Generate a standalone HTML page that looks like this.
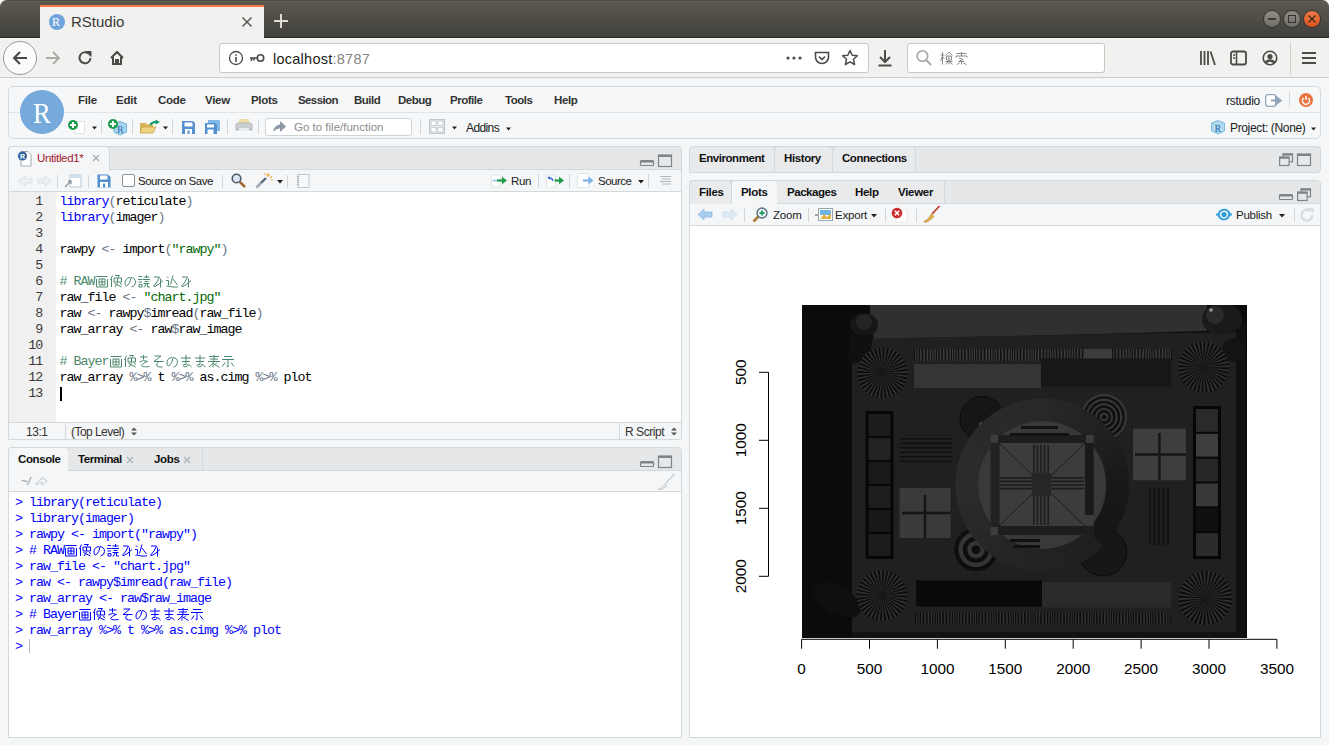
<!DOCTYPE html>
<html><head><meta charset="utf-8">
<style>
*{box-sizing:border-box;margin:0;padding:0}
html,body{width:1329px;height:745px;overflow:hidden;background:#f5f6f7;font-family:"Liberation Sans",sans-serif;position:relative}
.a{position:absolute}
.t{position:absolute;white-space:nowrap;line-height:1}
.mono{font-family:"Liberation Mono",monospace}
svg{position:absolute;overflow:visible}
svg.cj{position:static;display:inline-block;overflow:visible}
</style></head><body>

<!-- ================= TITLE BAR ================= -->
<div class="a" style="left:0;top:0;width:1329px;height:38px;background:linear-gradient(#5b5850,#5a574f 8%,#403f3a);border-radius:7px 7px 0 0;border-top:1px solid #4d4b45"></div>
<div class="a" style="left:5px;top:1px;width:1319px;height:1px;background:#625f56"></div>
<div class="a" style="left:0;top:37px;width:1329px;height:1px;background:#2a2926"></div>
<div class="a" style="left:40px;top:5px;width:224px;height:33px;background:#f2f1f0;border-top:2px solid #f67a45"></div>
<div class="a" style="left:49px;top:14px;width:16px;height:16px;border-radius:50%;background:#6fa5dc"></div>
<div class="t" style="left:52px;top:16px;font-family:'Liberation Serif',serif;font-size:12px;color:#fff">R</div>
<div class="t" style="left:71px;top:14px;font-size:15px;color:#3b3a36">RStudio</div>
<svg style="left:242px;top:17px" width="10" height="10"><path d="M0.5 0.5L9.5 9.5M9.5 0.5L0.5 9.5" stroke="#5a5956" stroke-width="1.5"/></svg>
<svg style="left:274px;top:14px" width="14" height="14"><path d="M7 0V14M0 7H14" stroke="#dedbd3" stroke-width="2"/></svg>
<!-- window buttons -->
<div class="a" style="left:1263px;top:10px;width:18px;height:18px;border-radius:50%;background:linear-gradient(#8f8c85,#6f6d67);border:1px solid #34332f"></div>
<div class="a" style="left:1268px;top:18px;width:8px;height:1.6px;background:#3b3a36"></div>
<div class="a" style="left:1283px;top:10px;width:18px;height:18px;border-radius:50%;background:linear-gradient(#8f8c85,#6f6d67);border:1px solid #34332f"></div>
<div class="a" style="left:1288px;top:15px;width:8px;height:8px;border:1.3px solid #34332f"></div>
<div class="a" style="left:1303px;top:10px;width:18px;height:18px;border-radius:50%;background:linear-gradient(#f27a4c,#e0531f);border:1px solid #34332f"></div>
<svg style="left:1308px;top:15px" width="8" height="8"><path d="M0.5 0.5L7.5 7.5M7.5 0.5L0.5 7.5" stroke="#2a2a22" stroke-width="1.1"/></svg>

<!-- ================= NAV BAR ================= -->
<div class="a" style="left:0;top:38px;width:1329px;height:40px;background:#f2f1f0;border-bottom:1px solid #cfcdc9"></div>
<div class="a" style="left:3px;top:41px;width:34px;height:34px;border-radius:50%;background:#fbfbfb;border:1px solid #9a9996"></div>
<svg style="left:12px;top:51px" width="16" height="14"><path d="M15 7H2M8 1L2 7L8 13" stroke="#474643" stroke-width="2" fill="none"/></svg>
<svg style="left:45px;top:51px" width="16" height="14"><path d="M1 7H14M8 1L14 7L8 13" stroke="#acaba8" stroke-width="1.8" fill="none"/></svg>
<svg style="left:77px;top:50px" width="16" height="16"><path d="M13.5 8A5.5 5.5 0 1 1 11.5 3.5" stroke="#4c4b48" stroke-width="2" fill="none"/><path d="M9 1.5H14V6.5Z" fill="#4c4b48" stroke="#4c4b48" stroke-width="1"/></svg>
<svg style="left:109px;top:50px" width="16" height="16"><path d="M2 8L8 2L14 8M4 7V14H12V7M7 14V10H9V14" stroke="#4c4b48" stroke-width="2" fill="none"/></svg>
<!-- url bar -->
<div class="a" style="left:219px;top:43px;width:650px;height:30px;background:#fff;border:1px solid #c8c7c3;border-radius:3px"></div>
<svg style="left:228px;top:50px" width="16" height="16"><circle cx="8" cy="8" r="6.5" stroke="#4c4b48" stroke-width="1.3" fill="none"/><path d="M8 7V12M8 4.2V5.8" stroke="#4c4b48" stroke-width="1.6"/></svg>
<svg style="left:249px;top:52px" width="16" height="12"><circle cx="11.5" cy="6" r="3.2" stroke="#4c4b48" stroke-width="1.6" fill="none"/><path d="M8 6H1M2.5 6V9M5 6V8.5" stroke="#4c4b48" stroke-width="1.6"/></svg>
<div class="t" style="left:273px;top:52px;font-size:14.5px;color:#1c1b1a;letter-spacing:0.25px">localhost<span style="color:#858481">:8787</span></div>
<svg style="left:786px;top:56px" width="16" height="4"><circle cx="2" cy="2" r="1.6" fill="#4c4b48"/><circle cx="8" cy="2" r="1.6" fill="#4c4b48"/><circle cx="14" cy="2" r="1.6" fill="#4c4b48"/></svg>
<svg style="left:814px;top:50px" width="16" height="16"><path d="M1.5 2.5H14.5V7A6.5 6.5 0 0 1 1.5 7Z" stroke="#4c4b48" stroke-width="1.6" fill="none"/><path d="M5 6.5L8 9.5L11 6.5" stroke="#4c4b48" stroke-width="1.6" fill="none"/></svg>
<svg style="left:841px;top:49px" width="18" height="18"><path d="M9 1.5L11.2 6.3L16.4 6.8L12.5 10.3L13.6 15.5L9 12.8L4.4 15.5L5.5 10.3L1.6 6.8L6.8 6.3Z" stroke="#4c4b48" stroke-width="1.5" fill="none" stroke-linejoin="round"/></svg>
<svg style="left:877px;top:49px" width="16" height="18"><path d="M8 1V13M3 8L8 13L13 8M1.5 16.5H14.5" stroke="#4c4b48" stroke-width="2" fill="none"/></svg>
<!-- search -->
<div class="a" style="left:907px;top:43px;width:198px;height:30px;background:#fff;border:1px solid #c8c7c3;border-radius:3px"></div>
<svg style="left:915px;top:49px" width="18" height="18"><circle cx="7.4" cy="7.1" r="5.3" stroke="#a5a5a3" stroke-width="1.6" fill="none"/><path d="M11.2 11L16.2 16" stroke="#a5a5a3" stroke-width="1.8"/></svg>
<div class="t" style="left:939px;top:50.5px;color:#8b8a87"><svg class="cj" width="15" height="16" viewBox="0 0 14 16" style="vertical-align:top;margin-top:0px"><path d="M3 1V13.5M1 4H5M3 5L1 10M3 5.5L5 8M9.5 1L6.5 4.5M9.5 1L13 4.5M7 5H12V9H7ZM9.5 5V13.5M6 10.5H13M9 10.5L6 13.5M10 10.5L13 13.5" stroke="currentColor" stroke-width="1" fill="none"/></svg><svg class="cj" width="15" height="16" viewBox="0 0 14 16" style="vertical-align:top;margin-top:0px"><path d="M2 2.5H12M7 1V5M1.5 6.5V5H12.5V6.5M4.5 7L8.5 8.5L4 10.5H10M7 10.5V13.5M5 12L2.5 13.5M9 12L12 13.5" stroke="currentColor" stroke-width="1" fill="none"/></svg></div>
<!-- right icons -->
<svg style="left:1199px;top:50px" width="18" height="16"><path d="M2 1V15M5.5 1V15M9 1V15M11.5 1.5L16 15" stroke="#4c4b48" stroke-width="1.8" fill="none"/></svg>
<svg style="left:1230px;top:50px" width="17" height="16"><rect x="1" y="1.5" width="15" height="13" rx="2" stroke="#4c4b48" stroke-width="1.8" fill="none"/><path d="M6.5 1.5V14.5M3 5H5M3 8H5" stroke="#4c4b48" stroke-width="1.6"/></svg>
<svg style="left:1262px;top:50px" width="16" height="16"><circle cx="8" cy="8" r="6.8" stroke="#4c4b48" stroke-width="1.6" fill="none"/><circle cx="8" cy="6.5" r="2.6" fill="#4c4b48"/><path d="M3.5 12.5Q8 8.5 12.5 12.5" stroke="#4c4b48" stroke-width="2.5" fill="none"/></svg>
<div class="a" style="left:1290px;top:42px;width:1px;height:33px;background:#d4d2ce"></div>
<svg style="left:1301px;top:51px" width="16" height="14"><path d="M1 2H15M1 7H15M1 12H15" stroke="#4c4b48" stroke-width="1.8"/></svg>

<!-- ================= RSTUDIO TOOLBAR ================= -->
<div class="a" style="left:8px;top:86px;width:1313px;height:53px;background:#f5f7f8;border:1px solid #d6dadd;border-radius:5px"></div>
<div class="a" style="left:9px;top:112px;width:1311px;height:1px;background:#dfe3e5"></div>


<!-- toolbar row 1 -->
<div class="a" style="left:20px;top:90px;width:44px;height:44px;border-radius:50%;background:#75aadb"></div>
<div class="t" style="left:32.5px;top:99px;font-family:'Liberation Serif',serif;font-size:29px;color:#fff;transform:scaleX(0.92);transform-origin:0 0">R</div>
<div class="t" style="left:78px;top:95px;font-size:11.5px;font-weight:bold;color:#333;letter-spacing:-0.2px">File</div>
<div class="t" style="left:116px;top:95px;font-size:11.5px;font-weight:bold;color:#333;letter-spacing:-0.2px">Edit</div>
<div class="t" style="left:158px;top:95px;font-size:11.5px;font-weight:bold;color:#333;letter-spacing:-0.3px">Code</div>
<div class="t" style="left:205px;top:95px;font-size:11.5px;font-weight:bold;color:#333;letter-spacing:-0.3px">View</div>
<div class="t" style="left:251px;top:95px;font-size:11.5px;font-weight:bold;color:#333;letter-spacing:-0.3px">Plots</div>
<div class="t" style="left:298px;top:95px;font-size:11.5px;font-weight:bold;color:#333;letter-spacing:-0.6px">Session</div>
<div class="t" style="left:354px;top:95px;font-size:11.5px;font-weight:bold;color:#333;letter-spacing:-0.5px">Build</div>
<div class="t" style="left:398px;top:95px;font-size:11.5px;font-weight:bold;color:#333;letter-spacing:-0.5px">Debug</div>
<div class="t" style="left:450px;top:95px;font-size:11.5px;font-weight:bold;color:#333;letter-spacing:-0.5px">Profile</div>
<div class="t" style="left:505px;top:95px;font-size:11.5px;font-weight:bold;color:#333;letter-spacing:-0.5px">Tools</div>
<div class="t" style="left:554px;top:95px;font-size:11.5px;font-weight:bold;color:#333;letter-spacing:-0.4px">Help</div>
<div class="t" style="left:1226px;top:95px;font-size:12px;color:#222;letter-spacing:-0.3px">rstudio</div>
<svg style="left:1265px;top:94px" width="17" height="13"><rect x="0.7" y="0.7" width="10" height="11.6" rx="2" fill="#fff" stroke="#93a5b8" stroke-width="1.3"/><path d="M6 6.5H12M11 3L15.5 6.5L11 10Z" stroke="#93a5b8" stroke-width="2.2" fill="#93a5b8"/></svg>
<div class="a" style="left:1289px;top:92px;width:1px;height:15px;background:#d3d7da"></div>
<div class="a" style="left:1299px;top:93px;width:14px;height:14px;border-radius:50%;background:#e8733c"></div>
<svg style="left:1301px;top:95px" width="10" height="10"><path d="M2.6 3A3.6 3.6 0 1 0 7.4 3" stroke="#fff" stroke-width="1.4" fill="none"/><path d="M5 1V5" stroke="#fff" stroke-width="1.4"/></svg>

<!-- toolbar row 2 -->
<div class="a" style="left:74px;top:121px;width:11px;height:13px;background:#fff;border:1px solid #e2e5e7"></div>
<div class="a" style="left:68px;top:120px;width:10px;height:10px;border-radius:50%;background:#1a9c4c"></div>
<svg style="left:68px;top:120px" width="10" height="10"><path d="M5 2V8M2 5H8" stroke="#fff" stroke-width="2"/></svg>
<svg style="left:91px;top:126px" width="7" height="4"><path d="M1 0.5H6L3.5 3.5Z" fill="#222"/></svg>
<div class="a" style="left:101px;top:119px;width:1px;height:15px;background:#d3d7da"></div>
<svg style="left:112px;top:120px" width="16" height="16"><path d="M2 4L8 1.5L14.5 4V12L8 15L2 12Z" fill="#a8d6ec" stroke="#6ab3d8" stroke-width="1"/><text x="5" y="12.5" font-family="Liberation Serif" font-size="10" fill="#2a6fb0">R</text></svg>
<div class="a" style="left:108px;top:119px;width:10px;height:10px;border-radius:50%;background:#1a9c4c"></div>
<svg style="left:108px;top:119px" width="10" height="10"><path d="M5 2V8M2 5H8" stroke="#fff" stroke-width="2"/></svg>
<div class="a" style="left:132px;top:119px;width:1px;height:15px;background:#d3d7da"></div>
<svg style="left:139px;top:119px" width="22" height="16"><path d="M1 4H7L8.5 5.5H14V14H1Z" fill="#d9b55a"/><path d="M3 8H17L14 14H1Z" fill="#f0d481" stroke="#c9a24a" stroke-width="0.8"/><path d="M11 6Q13 2.5 17.5 3" stroke="#1a9c6c" stroke-width="2" fill="none"/><path d="M16.5 0.5L21 3L16.5 5.5Z" fill="#1a9c6c"/></svg>
<svg style="left:162px;top:126px" width="7" height="4"><path d="M1 0.5H6L3.5 3.5Z" fill="#222"/></svg>
<div class="a" style="left:172px;top:119px;width:1px;height:15px;background:#d3d7da"></div>
<svg style="left:181px;top:120px" width="15" height="15"><path d="M1 1H12L14 3V14H1Z" fill="#5490cf"/><rect x="3.5" y="2.5" width="8" height="4" fill="#fff"/><rect x="4" y="9" width="7" height="5" fill="#fff"/><rect x="6.5" y="10.5" width="2" height="3.5" fill="#5490cf"/></svg>
<svg style="left:204px;top:119px" width="17" height="16"><path d="M4 1H15L16 2V12H4Z" fill="#7fb8e6"/><path d="M1 4H11L13 6V15H1Z" fill="#5490cf"/><rect x="3" y="5.5" width="7" height="3" fill="#fff"/><rect x="3.5" y="10.5" width="6" height="4.5" fill="#fff"/></svg>
<div class="a" style="left:227px;top:119px;width:1px;height:15px;background:#d3d7da"></div>
<svg style="left:235px;top:118px" width="18" height="15"><rect x="4" y="1" width="10" height="6" fill="#eedba6"/><path d="M1 7Q1 5 3 5H15Q17 5 17 7V12H1Z" fill="#c9cdd1" stroke="#a9aeb3" stroke-width="0.8"/><rect x="4" y="10" width="10" height="3" fill="#e9ecee"/></svg>
<div class="a" style="left:258px;top:119px;width:1px;height:15px;background:#d3d7da"></div>
<div class="a" style="left:265px;top:118px;width:147px;height:18px;background:#fff;border:1px solid #cfd3d6;border-radius:3px"></div>
<svg style="left:272px;top:120px" width="15" height="13"><path d="M1 12Q2 5 8 4.5V1L14 6.5L8 12V8.5Q4 8.5 1 12Z" fill="#8e99a5"/></svg>
<div class="t" style="left:294px;top:122px;font-size:11.5px;color:#8c8c8c;letter-spacing:0px">Go to file/function</div>
<div class="a" style="left:420px;top:119px;width:1px;height:15px;background:#d3d7da"></div>
<svg style="left:429px;top:119px" width="16" height="15"><rect x="0.5" y="0.5" width="15" height="14" fill="#e6e8ea" stroke="#c2c7cb"/><rect x="2" y="2" width="5" height="4.5" fill="#fff" stroke="#c2c7cb" stroke-width="0.8"/><rect x="9" y="2" width="5" height="4.5" fill="#fff" stroke="#c2c7cb" stroke-width="0.8"/><rect x="2" y="8.5" width="5" height="4.5" fill="#fff" stroke="#c2c7cb" stroke-width="0.8"/><rect x="9" y="8.5" width="5" height="4.5" fill="#fff" stroke="#c2c7cb" stroke-width="0.8"/></svg>
<svg style="left:451px;top:126px" width="7" height="4"><path d="M1 0.5H6L3.5 3.5Z" fill="#222"/></svg>
<div class="t" style="left:466px;top:122px;font-size:12px;color:#222;letter-spacing:-0.6px">Addins</div>
<svg style="left:505px;top:127px" width="7" height="4"><path d="M1 0.5H6L3.5 3.5Z" fill="#222"/></svg>
<svg style="left:1210px;top:119px" width="16" height="16"><path d="M1.5 4L8 1.5L14.5 4V12L8 15L1.5 12Z" fill="#b5dcee" stroke="#7cbddf" stroke-width="1"/><path d="M1.5 4L8 6.5L14.5 4M8 6.5V15" stroke="#8cc7e3" stroke-width="0.7" fill="none"/><text x="4.5" y="12.5" font-family="Liberation Serif" font-size="10" fill="#2f6ea8">R</text></svg>
<div class="t" style="left:1230px;top:122px;font-size:12px;color:#222;letter-spacing:-0.35px">Project: (None)</div>
<svg style="left:1310px;top:127px" width="7" height="4"><path d="M1 0.5H6L3.5 3.5Z" fill="#222"/></svg>

<!-- ================= SOURCE PANE ================= -->
<div class="a" style="left:8px;top:146px;width:674px;height:294px;background:#f4f6f7;border:1px solid #d3d8db;border-radius:4px 4px 0 0"></div>
<div class="a" style="left:9px;top:147px;width:672px;height:23px;background:#e5e7e9;border-bottom:1px solid #d3d8db;border-radius:3px 3px 0 0"></div>
<div class="a" style="left:8px;top:146px;width:102px;height:25px;background:#f4f6f7;border:1px solid #d3d8db;border-bottom:none;border-radius:4px 4px 0 0"></div>
<svg style="left:17px;top:150px" width="17" height="17"><path d="M4 1.5H11L14 4.5V16H4Z" fill="#fff" stroke="#9aa3ab" stroke-width="0.9"/><circle cx="5.5" cy="6" r="4.5" fill="#2b5f9e"/><text x="3" y="8.8" font-family="Liberation Sans" font-weight="bold" font-size="7" fill="#fff">R</text></svg>
<div class="t" style="left:37px;top:153px;font-size:11.5px;color:#a3192e;letter-spacing:-0.35px">Untitled1*</div>
<svg style="left:92px;top:154px" width="8" height="8"><path d="M1 1L7 7M7 1L1 7" stroke="#a9aeb2" stroke-width="1.4"/></svg>
<svg style="left:640px;top:154px" width="34" height="14"><rect x="0.5" y="6.5" width="13" height="5" rx="1" fill="none" stroke="#7d848a" stroke-width="1.2"/><rect x="0.5" y="6.5" width="13" height="2" fill="#7d848a"/><rect x="18.5" y="1" width="13" height="11.5" fill="none" stroke="#7d848a" stroke-width="1.2"/><rect x="18.5" y="1" width="13" height="2" fill="#7d848a"/></svg>
<div class="a" style="left:9px;top:191px;width:672px;height:1px;background:#d3d8db"></div>
<!-- toolbar icons -->
<svg style="left:18px;top:175px" width="34" height="12"><path d="M1 6L7 1V4H14V8H7V11Z" fill="#eef1f3" stroke="#d6dbde" stroke-width="0.8"/><path d="M33 6L27 1V4H20V8H27V11Z" fill="#eef1f3" stroke="#d6dbde" stroke-width="0.8"/></svg>
<div class="a" style="left:57px;top:175px;width:1px;height:13px;background:#d3d7da"></div>
<svg style="left:64px;top:174px" width="18" height="14"><rect x="6" y="1" width="11" height="12" fill="#fff" stroke="#b8c6d4" stroke-width="1"/><rect x="6" y="1" width="11" height="3" fill="#cfdff0"/><path d="M1 13L7 7M4 7H7V10" stroke="#8b97a3" stroke-width="1.3" fill="none"/></svg>
<div class="a" style="left:88px;top:175px;width:1px;height:13px;background:#d3d7da"></div>
<svg style="left:97px;top:174px" width="14" height="14"><path d="M0.5 0.5H11L13.5 3V13.5H0.5Z" fill="#5490cf"/><rect x="3" y="1.5" width="7.5" height="4" fill="#fff"/><rect x="3" y="8" width="8" height="5.5" fill="#fff"/><rect x="6" y="9.5" width="2.2" height="4" fill="#5490cf"/></svg>
<div class="a" style="left:122px;top:174px;width:13px;height:13px;background:#fff;border:1px solid #8b9196;border-radius:2px"></div>
<div class="t" style="left:138px;top:176px;font-size:11.5px;color:#222;letter-spacing:-0.5px">Source on Save</div>
<div class="a" style="left:222px;top:175px;width:1px;height:13px;background:#d3d7da"></div>
<svg style="left:231px;top:173px" width="15" height="15"><circle cx="5.5" cy="5.5" r="4.3" fill="#dbe7f2" stroke="#4b5864" stroke-width="1.6"/><path d="M8.8 8.8L14 14" stroke="#9a6a2f" stroke-width="2.6"/></svg>
<svg style="left:255px;top:172px" width="18" height="17"><path d="M1.5 15.5L11 6" stroke="#5b6a7a" stroke-width="2.4"/><path d="M1.5 15.5L6 11" stroke="#a7b4c0" stroke-width="2.4"/><path d="M13 1V5M11 3H15M15.5 6L17 4.5M16 8H18M9 1L10 2.5" stroke="#f0a83c" stroke-width="1.2"/></svg>
<svg style="left:277px;top:180px" width="6" height="4"><path d="M0 0H6L3 3.5Z" fill="#222"/></svg>
<div class="a" style="left:287px;top:175px;width:1px;height:13px;background:#d3d7da"></div>
<svg style="left:297px;top:174px" width="13" height="14"><rect x="1" y="0.5" width="11" height="13" fill="#f7f8f9" stroke="#b8bec3" stroke-width="0.9"/><path d="M1 2V12" stroke="#9aa1a7" stroke-width="1.5" stroke-dasharray="1 1"/></svg>
<svg style="left:491px;top:174px" width="18" height="14"><rect x="0.5" y="1" width="9" height="12" rx="1" fill="#fff" stroke="#dbe0e3" stroke-width="0.8"/><path d="M1.5 6.5H6" stroke="#a6c8ea" stroke-width="1.8"/><path d="M6 6.5H12" stroke="#1e9c4a" stroke-width="2.2"/><path d="M11 2.8L16 6.5L11 10.2Z" fill="#1e9c4a"/></svg>
<div class="t" style="left:511px;top:176px;font-size:11.5px;color:#222;letter-spacing:-0.4px">Run</div>
<div class="a" style="left:538px;top:174px;width:1px;height:14px;background:#d3d7da"></div>
<svg style="left:546px;top:174px" width="20" height="14"><rect x="0.5" y="1" width="9" height="12" rx="1" fill="#fff" stroke="#dbe0e3" stroke-width="0.8"/><path d="M3 4.5Q6.5 3 6.5 7" stroke="#2563c8" stroke-width="1.4" fill="none"/><path d="M1.5 3L4 2.5L3.5 6Z" fill="#2563c8"/><path d="M8.5 6.5H14" stroke="#1e9c4a" stroke-width="2.2"/><path d="M13 2.8L18 6.5L13 10.2Z" fill="#1e9c4a"/></svg>
<div class="a" style="left:569px;top:174px;width:1px;height:14px;background:#d3d7da"></div>
<svg style="left:577px;top:173px" width="20" height="15"><rect x="0.5" y="0.5" width="11" height="14" rx="1" fill="#fff" stroke="#dbe0e3" stroke-width="0.8"/><path d="M6 7.5H12" stroke="#7fb3e6" stroke-width="2.2"/><path d="M11.5 3.5L16.5 7.5L11.5 11.5Z" fill="#7fb3e6"/></svg>
<div class="t" style="left:598px;top:176px;font-size:11.5px;color:#222;letter-spacing:-0.5px">Source</div>
<svg style="left:638px;top:180px" width="6" height="4"><path d="M0 0H6L3 3.5Z" fill="#222"/></svg>
<div class="a" style="left:648px;top:174px;width:1px;height:14px;background:#d3d7da"></div>
<svg style="left:659px;top:175px" width="14" height="11"><path d="M1 1.5H12M3 4H11M1 6.5H12M3 9H12" stroke="#a8afb5" stroke-width="0.9"/></svg>
<!-- editor -->
<div class="a" style="left:9px;top:192px;width:672px;height:230px;background:#fff"></div>
<div class="a" style="left:9px;top:192px;width:47px;height:230px;background:#f0f0f0"></div>
<div class="a" style="left:9px;top:422px;width:672px;height:1px;background:#d3d8db"></div>
<div class="t" style="left:26px;top:426px;font-size:12px;color:#333;letter-spacing:-0.45px">13:1</div>
<div class="a" style="left:65px;top:423px;width:1px;height:16px;background:#d3d8db"></div>
<div class="t" style="left:71px;top:426px;font-size:12px;color:#333;letter-spacing:-0.55px">(Top Level)</div>
<svg style="left:131px;top:427px" width="6" height="9"><path d="M0 3.5L3 0.5L6 3.5ZM0 5.5L3 8.5L6 5.5Z" fill="#555"/></svg>
<div class="a" style="left:619px;top:423px;width:1px;height:16px;background:#d3d8db"></div>
<div class="t" style="left:625px;top:426px;font-size:12px;color:#333;letter-spacing:-0.45px">R Script</div>
<svg style="left:671px;top:427px" width="6" height="9"><path d="M0 3.5L3 0.5L6 3.5ZM0 5.5L3 8.5L6 5.5Z" fill="#555"/></svg>


<div class="a mono" style="left:12.3px;top:193.5px;width:30px;text-align:right;font-size:13.33px;letter-spacing:-1px;line-height:16px;color:#3a3a3a;white-space:pre">1<br>2<br>3<br>4<br>5<br>6<br>7<br>8<br>9<br>10<br>11<br>12<br>13</div>
<div class="a mono" style="left:59.5px;top:193.5px;font-size:13.33px;letter-spacing:-1px;line-height:16px;color:#000;white-space:pre"><span style="color:#0000ff">library</span><span style="color:#687687">(</span>reticulate<span style="color:#687687">)</span><br><span style="color:#0000ff">library</span><span style="color:#687687">(</span>imager<span style="color:#687687">)</span><br><br>rawpy <span style="color:#687687">&lt;-</span> import<span style="color:#687687">(</span><span style="color:#036a07">"rawpy"</span><span style="color:#687687">)</span><br><br><span style="color:#4c886b"># RAW<svg class="cj" width="14" height="16" viewBox="0 0 14 16" style="vertical-align:top;margin-top:0px"><path d="M1.5 2.5H12.5M4 5V11H10V5ZM7 5V11M4 8H10M1.5 5V13H12.5V5" stroke="currentColor" stroke-width="1" fill="none"/></svg><svg class="cj" width="14" height="16" viewBox="0 0 14 16" style="vertical-align:top;margin-top:0px"><path d="M3.5 1.5L1.5 6M2.5 5V13M6 1.5H10.5L9 3M5 4H12.5V8H5ZM8.5 4V8M5.5 9.5L12.5 13M8.5 9L6 13M11 9.5L13 10.5" stroke="currentColor" stroke-width="1" fill="none"/></svg><svg class="cj" width="14" height="16" viewBox="0 0 14 16" style="vertical-align:top;margin-top:0px"><path d="M7 3.5Q2 4 2 9Q2 13 4.5 11.5Q7.5 9 8 3.5Q12.5 4 12.5 8.5Q12.5 12 8.5 13" stroke="currentColor" stroke-width="1" fill="none"/></svg><svg class="cj" width="14" height="16" viewBox="0 0 14 16" style="vertical-align:top;margin-top:0px"><path d="M1.5 2.5H5M1 5.5H5.5M1.5 8H5M2 10.5H5V13H2ZM9.5 1V4M6.5 3H12.5M6 5.5H13M7.5 7.5H11.5M6.5 9.5H12.5M9.5 9.5L7 13.5M10.5 9.5V13H13" stroke="currentColor" stroke-width="1" fill="none"/></svg><svg class="cj" width="14" height="16" viewBox="0 0 14 16" style="vertical-align:top;margin-top:0px"><path d="M3 3H8.5Q6 9 3.5 11Q1.5 13 4 12.5Q8 10.5 12 6.5M9.5 4.5V13.5" stroke="currentColor" stroke-width="1" fill="none"/></svg><svg class="cj" width="14" height="16" viewBox="0 0 14 16" style="vertical-align:top;margin-top:0px"><path d="M2 2.5L3.5 4M1 6.5H3.5V11L1.5 13M3 12Q7 13.5 13 13M8 1.5L5.5 10.5M8 5L12.5 11" stroke="currentColor" stroke-width="1" fill="none"/></svg><svg class="cj" width="14" height="16" viewBox="0 0 14 16" style="vertical-align:top;margin-top:0px"><path d="M3 3H8.5Q6 9 3.5 11Q1.5 13 4 12.5Q8 10.5 12 6.5M9.5 4.5V13.5" stroke="currentColor" stroke-width="1" fill="none"/></svg></span><br>raw_file <span style="color:#687687">&lt;-</span> <span style="color:#036a07">"chart.jpg"</span><br>raw <span style="color:#687687">&lt;-</span> rawpy<span style="color:#687687">$</span>imread<span style="color:#687687">(</span>raw_file<span style="color:#687687">)</span><br>raw_array <span style="color:#687687">&lt;-</span> raw<span style="color:#687687">$</span>raw_image<br><br><span style="color:#4c886b"># Bayer<svg class="cj" width="14" height="16" viewBox="0 0 14 16" style="vertical-align:top;margin-top:0px"><path d="M1.5 2.5H12.5M4 5V11H10V5ZM7 5V11M4 8H10M1.5 5V13H12.5V5" stroke="currentColor" stroke-width="1" fill="none"/></svg><svg class="cj" width="14" height="16" viewBox="0 0 14 16" style="vertical-align:top;margin-top:0px"><path d="M3.5 1.5L1.5 6M2.5 5V13M6 1.5H10.5L9 3M5 4H12.5V8H5ZM8.5 4V8M5.5 9.5L12.5 13M8.5 9L6 13M11 9.5L13 10.5" stroke="currentColor" stroke-width="1" fill="none"/></svg><svg class="cj" width="14" height="16" viewBox="0 0 14 16" style="vertical-align:top;margin-top:0px"><path d="M3 3H10.5M6.5 1V5.5M2.5 8Q7 5 10 7.5M11 7Q5 9.5 4.5 11.5Q6 13.5 12.5 12.5" stroke="currentColor" stroke-width="1" fill="none"/></svg><svg class="cj" width="14" height="16" viewBox="0 0 14 16" style="vertical-align:top;margin-top:0px"><path d="M3.5 2H10L3 7.5H12.5M8 7.5Q4.5 10 6 12Q8 13.5 11.5 13" stroke="currentColor" stroke-width="1" fill="none"/></svg><svg class="cj" width="14" height="16" viewBox="0 0 14 16" style="vertical-align:top;margin-top:0px"><path d="M7 3.5Q2 4 2 9Q2 13 4.5 11.5Q7.5 9 8 3.5Q12.5 4 12.5 8.5Q12.5 12 8.5 13" stroke="currentColor" stroke-width="1" fill="none"/></svg><svg class="cj" width="14" height="16" viewBox="0 0 14 16" style="vertical-align:top;margin-top:0px"><path d="M2 4H12M3 7.5H11M7 1V10.5Q4 10 4 11.5Q5 13.5 8 12.5Q9 11.5 8.5 10.5Q11 11 12.5 13" stroke="currentColor" stroke-width="1" fill="none"/></svg><svg class="cj" width="14" height="16" viewBox="0 0 14 16" style="vertical-align:top;margin-top:0px"><path d="M2 4H12M3 7.5H11M7 1V10.5Q4 10 4 11.5Q5 13.5 8 12.5Q9 11.5 8.5 10.5Q11 11 12.5 13" stroke="currentColor" stroke-width="1" fill="none"/></svg><svg class="cj" width="14" height="16" viewBox="0 0 14 16" style="vertical-align:top;margin-top:0px"><path d="M2 2.5H12M3 5H11M1 7.5H13M7 1V7.5M7 7.5Q5 11 2 13M6 9.5L12.5 13.5M10 8.5L8 10.5M6 10.5V13.5" stroke="currentColor" stroke-width="1" fill="none"/></svg><svg class="cj" width="14" height="16" viewBox="0 0 14 16" style="vertical-align:top;margin-top:0px"><path d="M3 2.5H11M1 5.5H13M7 5.5V13L5.5 12M4 8.5L1.5 12.5M10 8.5L13 12.5" stroke="currentColor" stroke-width="1" fill="none"/></svg></span><br>raw_array <span style="color:#687687">%&gt;%</span> t <span style="color:#687687">%&gt;%</span> as.cimg <span style="color:#687687">%&gt;%</span> plot<br></div>
<div class="a" style="left:60px;top:387px;width:2px;height:14px;background:#000"></div>

<!-- ================= CONSOLE PANE ================= -->
<div class="a" style="left:8px;top:447px;width:674px;height:291px;background:#fff;border:1px solid #d3d8db;border-radius:4px 4px 0 0"></div>
<div class="a" style="left:9px;top:448px;width:672px;height:23px;background:#e5e7e9;border-radius:3px 3px 0 0"></div>
<div class="a" style="left:9px;top:470px;width:672px;height:22px;background:#f4f6f7;border-top:1px solid #d3d8db;border-bottom:1px solid #d3d8db"></div>
<div class="a" style="left:8px;top:447px;width:61px;height:24px;background:#f4f6f7;border:1px solid #d3d8db;border-bottom:none;border-radius:4px 4px 0 0"></div>
<div class="a" style="left:68px;top:448px;width:77px;height:22px;background:#e5e7e9;border-right:1px solid #d3d8db"></div>
<div class="a" style="left:144px;top:448px;width:59px;height:22px;background:#e5e7e9;border-right:1px solid #d3d8db"></div>
<div class="t" style="left:18px;top:454px;font-size:11.5px;font-weight:bold;color:#111;letter-spacing:-0.4px">Console</div>
<div class="t" style="left:78px;top:454px;font-size:11.5px;font-weight:bold;color:#111;letter-spacing:-0.4px">Terminal</div>
<svg style="left:126px;top:456px" width="8" height="8"><path d="M1 1L7 7M7 1L1 7" stroke="#b0b4b8" stroke-width="1.4"/></svg>
<div class="t" style="left:154px;top:454px;font-size:11.5px;font-weight:bold;color:#111;letter-spacing:-0.3px">Jobs</div>
<svg style="left:183px;top:456px" width="8" height="8"><path d="M1 1L7 7M7 1L1 7" stroke="#b0b4b8" stroke-width="1.4"/></svg>
<svg style="left:640px;top:455px" width="34" height="14"><rect x="0.5" y="6.5" width="13" height="5" rx="1" fill="none" stroke="#7d848a" stroke-width="1.2"/><rect x="0.5" y="6.5" width="13" height="2" fill="#7d848a"/><rect x="18.5" y="1" width="13" height="11.5" fill="none" stroke="#7d848a" stroke-width="1.2"/><rect x="18.5" y="1" width="13" height="2" fill="#7d848a"/></svg>
<div class="t" style="left:21px;top:476px;font-size:11px;color:#888;font-style:italic">~/</div>
<svg style="left:35px;top:476px" width="13" height="10"><path d="M1 9Q2 3.5 7 3.5V1L12 5L7 9V6.5Q3.5 6.5 1 9Z" fill="none" stroke="#c5cbd0" stroke-width="1"/></svg>
<svg style="left:656px;top:473px" width="20" height="18"><path d="M9 11L18.5 1" stroke="#c8cdd1" stroke-width="1.2"/><path d="M2 16Q5 15.5 9 11.5L11 13Q8 16 3 17Z" fill="#e3e6e8" stroke="#c8cdd1" stroke-width="0.8"/></svg>
<div class="a mono" style="left:15px;top:494.5px;font-size:13.33px;letter-spacing:-1px;line-height:16px;color:#0000ff;white-space:pre">&gt; library(reticulate)<br>&gt; library(imager)<br>&gt; rawpy &lt;- import("rawpy")<br>&gt; # RAW<svg class="cj" width="14" height="16" viewBox="0 0 14 16" style="vertical-align:top;margin-top:0px"><path d="M1.5 2.5H12.5M4 5V11H10V5ZM7 5V11M4 8H10M1.5 5V13H12.5V5" stroke="currentColor" stroke-width="1" fill="none"/></svg><svg class="cj" width="14" height="16" viewBox="0 0 14 16" style="vertical-align:top;margin-top:0px"><path d="M3.5 1.5L1.5 6M2.5 5V13M6 1.5H10.5L9 3M5 4H12.5V8H5ZM8.5 4V8M5.5 9.5L12.5 13M8.5 9L6 13M11 9.5L13 10.5" stroke="currentColor" stroke-width="1" fill="none"/></svg><svg class="cj" width="14" height="16" viewBox="0 0 14 16" style="vertical-align:top;margin-top:0px"><path d="M7 3.5Q2 4 2 9Q2 13 4.5 11.5Q7.5 9 8 3.5Q12.5 4 12.5 8.5Q12.5 12 8.5 13" stroke="currentColor" stroke-width="1" fill="none"/></svg><svg class="cj" width="14" height="16" viewBox="0 0 14 16" style="vertical-align:top;margin-top:0px"><path d="M1.5 2.5H5M1 5.5H5.5M1.5 8H5M2 10.5H5V13H2ZM9.5 1V4M6.5 3H12.5M6 5.5H13M7.5 7.5H11.5M6.5 9.5H12.5M9.5 9.5L7 13.5M10.5 9.5V13H13" stroke="currentColor" stroke-width="1" fill="none"/></svg><svg class="cj" width="14" height="16" viewBox="0 0 14 16" style="vertical-align:top;margin-top:0px"><path d="M3 3H8.5Q6 9 3.5 11Q1.5 13 4 12.5Q8 10.5 12 6.5M9.5 4.5V13.5" stroke="currentColor" stroke-width="1" fill="none"/></svg><svg class="cj" width="14" height="16" viewBox="0 0 14 16" style="vertical-align:top;margin-top:0px"><path d="M2 2.5L3.5 4M1 6.5H3.5V11L1.5 13M3 12Q7 13.5 13 13M8 1.5L5.5 10.5M8 5L12.5 11" stroke="currentColor" stroke-width="1" fill="none"/></svg><svg class="cj" width="14" height="16" viewBox="0 0 14 16" style="vertical-align:top;margin-top:0px"><path d="M3 3H8.5Q6 9 3.5 11Q1.5 13 4 12.5Q8 10.5 12 6.5M9.5 4.5V13.5" stroke="currentColor" stroke-width="1" fill="none"/></svg><br>&gt; raw_file &lt;- "chart.jpg"<br>&gt; raw &lt;- rawpy$imread(raw_file)<br>&gt; raw_array &lt;- raw$raw_image<br>&gt; # Bayer<svg class="cj" width="14" height="16" viewBox="0 0 14 16" style="vertical-align:top;margin-top:0px"><path d="M1.5 2.5H12.5M4 5V11H10V5ZM7 5V11M4 8H10M1.5 5V13H12.5V5" stroke="currentColor" stroke-width="1" fill="none"/></svg><svg class="cj" width="14" height="16" viewBox="0 0 14 16" style="vertical-align:top;margin-top:0px"><path d="M3.5 1.5L1.5 6M2.5 5V13M6 1.5H10.5L9 3M5 4H12.5V8H5ZM8.5 4V8M5.5 9.5L12.5 13M8.5 9L6 13M11 9.5L13 10.5" stroke="currentColor" stroke-width="1" fill="none"/></svg><svg class="cj" width="14" height="16" viewBox="0 0 14 16" style="vertical-align:top;margin-top:0px"><path d="M3 3H10.5M6.5 1V5.5M2.5 8Q7 5 10 7.5M11 7Q5 9.5 4.5 11.5Q6 13.5 12.5 12.5" stroke="currentColor" stroke-width="1" fill="none"/></svg><svg class="cj" width="14" height="16" viewBox="0 0 14 16" style="vertical-align:top;margin-top:0px"><path d="M3.5 2H10L3 7.5H12.5M8 7.5Q4.5 10 6 12Q8 13.5 11.5 13" stroke="currentColor" stroke-width="1" fill="none"/></svg><svg class="cj" width="14" height="16" viewBox="0 0 14 16" style="vertical-align:top;margin-top:0px"><path d="M7 3.5Q2 4 2 9Q2 13 4.5 11.5Q7.5 9 8 3.5Q12.5 4 12.5 8.5Q12.5 12 8.5 13" stroke="currentColor" stroke-width="1" fill="none"/></svg><svg class="cj" width="14" height="16" viewBox="0 0 14 16" style="vertical-align:top;margin-top:0px"><path d="M2 4H12M3 7.5H11M7 1V10.5Q4 10 4 11.5Q5 13.5 8 12.5Q9 11.5 8.5 10.5Q11 11 12.5 13" stroke="currentColor" stroke-width="1" fill="none"/></svg><svg class="cj" width="14" height="16" viewBox="0 0 14 16" style="vertical-align:top;margin-top:0px"><path d="M2 4H12M3 7.5H11M7 1V10.5Q4 10 4 11.5Q5 13.5 8 12.5Q9 11.5 8.5 10.5Q11 11 12.5 13" stroke="currentColor" stroke-width="1" fill="none"/></svg><svg class="cj" width="14" height="16" viewBox="0 0 14 16" style="vertical-align:top;margin-top:0px"><path d="M2 2.5H12M3 5H11M1 7.5H13M7 1V7.5M7 7.5Q5 11 2 13M6 9.5L12.5 13.5M10 8.5L8 10.5M6 10.5V13.5" stroke="currentColor" stroke-width="1" fill="none"/></svg><svg class="cj" width="14" height="16" viewBox="0 0 14 16" style="vertical-align:top;margin-top:0px"><path d="M3 2.5H11M1 5.5H13M7 5.5V13L5.5 12M4 8.5L1.5 12.5M10 8.5L13 12.5" stroke="currentColor" stroke-width="1" fill="none"/></svg><br>&gt; raw_array %&gt;% t %&gt;% as.cimg %&gt;% plot<br>&gt; </div>
<div class="a" style="left:29px;top:639px;width:1px;height:14px;background:#bbb"></div>


<!-- ================= ENV PANE ================= -->
<div class="a" style="left:689px;top:146px;width:632px;height:27px;background:#e5e7e9;border:1px solid #d3d8db;border-radius:4px"></div>
<div class="a" style="left:689px;top:146px;width:86px;height:27px;background:#e8eaec;border:1px solid #d3d8db;border-radius:4px 4px 0 0"></div>
<div class="a" style="left:774px;top:146px;width:59px;height:27px;background:#e8eaec;border:1px solid #d3d8db;border-radius:4px 4px 0 0"></div>
<div class="a" style="left:832px;top:146px;width:84px;height:27px;background:#e8eaec;border:1px solid #d3d8db;border-radius:4px 4px 0 0"></div>
<div class="t" style="left:699px;top:153px;font-size:11.5px;font-weight:bold;color:#111;letter-spacing:-0.45px">Environment</div>
<div class="t" style="left:784px;top:153px;font-size:11.5px;font-weight:bold;color:#111;letter-spacing:-0.4px">History</div>
<div class="t" style="left:842px;top:153px;font-size:11.5px;font-weight:bold;color:#111;letter-spacing:-0.45px">Connections</div>
<svg style="left:1279px;top:153px" width="34" height="14"><rect x="4" y="0.8" width="9.5" height="8" fill="none" stroke="#7d848a" stroke-width="1.2"/><rect x="4" y="0.8" width="9.5" height="1.8" fill="#7d848a"/><rect x="0.6" y="4" width="9.5" height="8.5" fill="#e5e7e9" stroke="#7d848a" stroke-width="1.2"/><rect x="0.6" y="4" width="9.5" height="1.8" fill="#7d848a"/><rect x="18.5" y="1" width="13" height="11.5" fill="none" stroke="#7d848a" stroke-width="1.2"/><rect x="18.5" y="1" width="13" height="2" fill="#7d848a"/></svg>

<!-- ================= FILES/PLOTS PANE ================= -->
<div class="a" style="left:689px;top:180px;width:632px;height:558px;background:#fff;border:1px solid #d3d8db;border-radius:4px 4px 0 0"></div>
<div class="a" style="left:690px;top:181px;width:630px;height:23px;background:#e5e7e9;border-radius:3px 3px 0 0"></div>
<div class="a" style="left:690px;top:203px;width:630px;height:23px;background:#f4f6f7;border-top:1px solid #d3d8db;border-bottom:1px solid #d3d8db"></div>
<div class="a" style="left:689px;top:180px;width:43px;height:24px;background:#e8eaec;border:1px solid #d3d8db;border-bottom:none;border-radius:4px 4px 0 0"></div>
<div class="a" style="left:731px;top:180px;width:47px;height:24px;background:#f4f6f7;border:1px solid #d3d8db;border-bottom:none;border-radius:4px 4px 0 0"></div>
<div class="a" style="left:777px;top:181px;width:69px;height:22px;background:#e8eaec;border-right:1px solid #d3d8db"></div>
<div class="a" style="left:845px;top:181px;width:44px;height:22px;background:#e8eaec;border-right:1px solid #d3d8db"></div>
<div class="a" style="left:888px;top:181px;width:57px;height:22px;background:#e8eaec;border-right:1px solid #d3d8db"></div>
<div class="t" style="left:699px;top:187px;font-size:11.5px;font-weight:bold;color:#111;letter-spacing:-0.3px">Files</div>
<div class="t" style="left:741px;top:187px;font-size:11.5px;font-weight:bold;color:#111;letter-spacing:-0.3px">Plots</div>
<div class="t" style="left:787px;top:187px;font-size:11.5px;font-weight:bold;color:#111;letter-spacing:-0.45px">Packages</div>
<div class="t" style="left:855px;top:187px;font-size:11.5px;font-weight:bold;color:#111;letter-spacing:-0.3px">Help</div>
<div class="t" style="left:898px;top:187px;font-size:11.5px;font-weight:bold;color:#111;letter-spacing:-0.3px">Viewer</div>
<svg style="left:1279px;top:188px" width="34" height="14"><rect x="0.5" y="6.5" width="13" height="5" rx="1" fill="none" stroke="#7d848a" stroke-width="1.2"/><rect x="0.5" y="6.5" width="13" height="2" fill="#7d848a"/><rect x="22" y="0.8" width="9.5" height="8" fill="none" stroke="#7d848a" stroke-width="1.2"/><rect x="22" y="0.8" width="9.5" height="1.8" fill="#7d848a"/><rect x="18.6" y="4" width="9.5" height="8.5" fill="#e5e7e9" stroke="#7d848a" stroke-width="1.2"/><rect x="18.6" y="4" width="9.5" height="1.8" fill="#7d848a"/></svg>
<!-- plots toolbar -->
<svg style="left:697px;top:208px" width="16" height="13"><path d="M1 6.5L7 1V4H15V9H7V12Z" fill="#a9cdee" stroke="#8db8e0" stroke-width="0.8"/></svg>
<svg style="left:722px;top:208px" width="16" height="13"><path d="M15 6.5L9 1V4H1V9H9V12Z" fill="#dde9f4" stroke="#cfdeed" stroke-width="0.8"/></svg>
<div class="a" style="left:744px;top:208px;width:1px;height:14px;background:#d3d7da"></div>
<svg style="left:752px;top:206px" width="17" height="17"><path d="M1.5 15.5L6.5 10.5" stroke="#b07b3a" stroke-width="2.6"/><circle cx="10" cy="7" r="5" fill="#e8f2f8" stroke="#5d6c78" stroke-width="1.4"/><path d="M10 4.5V9.5M7.5 7H12.5" stroke="#1ea05a" stroke-width="1.8"/></svg>
<div class="t" style="left:773px;top:210px;font-size:11.5px;color:#222;letter-spacing:-0.2px">Zoom</div>
<div class="a" style="left:808px;top:208px;width:1px;height:14px;background:#d3d7da"></div>
<svg style="left:815px;top:207px" width="18" height="15"><path d="M0 8H4" stroke="#666" stroke-width="1.2"/><rect x="3.5" y="1.5" width="14" height="12" fill="#fff" stroke="#9aa5ae" stroke-width="1"/><rect x="5" y="3" width="11" height="5" fill="#6fb4e8"/><path d="M5 12L9 7L12 10L16 6V12Z" fill="#e6b14a"/></svg>
<div class="t" style="left:835px;top:210px;font-size:11.5px;color:#222;letter-spacing:-0.2px">Export</div>
<svg style="left:871px;top:214px" width="6" height="4"><path d="M0 0H6L3 3.5Z" fill="#222"/></svg>
<div class="a" style="left:885px;top:208px;width:1px;height:14px;background:#d3d7da"></div>
<svg style="left:891px;top:207px" width="17" height="16"><rect x="5" y="3" width="11" height="12" fill="#fff" stroke="#e3e6e8" stroke-width="0.8"/><circle cx="6" cy="6" r="5.3" fill="#cf2a2a"/><path d="M3.8 3.8L8.2 8.2M8.2 3.8L3.8 8.2" stroke="#fff" stroke-width="1.6"/></svg>
<div class="a" style="left:916px;top:208px;width:1px;height:14px;background:#d3d7da"></div>
<svg style="left:922px;top:205px" width="19" height="18"><path d="M10 9L17.5 1" stroke="#c0392b" stroke-width="1.8"/><path d="M2 16.5Q6 15.5 9.5 9L12 11.5Q8 16 3 17.5Z" fill="#e2b24c" stroke="#b98a2b" stroke-width="0.8"/></svg>
<svg style="left:1215px;top:208px" width="18" height="13"><path d="M1 6.5H5" stroke="#2c9ee0" stroke-width="2"/><path d="M13 6.5H17" stroke="#2c9ee0" stroke-width="2"/><path d="M4 9A5.5 5.5 0 0 1 14 4.5" stroke="#2c9ee0" stroke-width="2" fill="none"/><path d="M14 4A5.5 5.5 0 0 1 4 8.5" stroke="#2c9ee0" stroke-width="2" fill="none"/><circle cx="9" cy="6.5" r="2.6" fill="#2c9ee0"/></svg>
<div class="t" style="left:1236px;top:210px;font-size:11.5px;color:#222;letter-spacing:-0.25px">Publish</div>
<svg style="left:1279px;top:214px" width="6" height="4"><path d="M0 0H6L3 3.5Z" fill="#222"/></svg>
<div class="a" style="left:1294px;top:208px;width:1px;height:14px;background:#d3d7da"></div>
<svg style="left:1299px;top:207px" width="16" height="16"><path d="M13.5 8A5.5 5.5 0 1 1 11 3.5" stroke="#d6dde3" stroke-width="2.6" fill="none"/><path d="M9 1H14.5V6.5Z" fill="#d6dde3"/></svg>

<!-- ================= PLOT ================= -->
<svg style="left:801.8px;top:305px;overflow:hidden" width="445.2" height="333.3" viewBox="0 0 445.2 333.3"><rect x="0.0" y="0.0" width="445.2" height="333.3" fill="#0b0b0b" /><path d="M68 0H405V26Q240 31 68 34Z" fill="#303030"/><path d="M50 34Q240 30 434 27V333H50Z" fill="#202020"/><rect x="50.0" y="327.0" width="386.0" height="6.3" fill="#121212" /><rect x="434.0" y="20.0" width="10.5" height="313.3" fill="#101010" /><ellipse cx="62" cy="20" rx="14" ry="12" fill="#161616"/><path d="M48 30L72 30L66 55L46 60Z" fill="#101010"/><circle cx="62.0" cy="17.0" r="8.0" fill="#242424" /><ellipse cx="420" cy="14" rx="20" ry="16" fill="#1a1a1a"/><circle cx="413.0" cy="10.0" r="9.0" fill="#2b2b2b" /><circle cx="409.0" cy="5.0" r="1.8" fill="#9a9a9a" /><ellipse cx="432" cy="45" rx="12" ry="12" fill="#141414"/><ellipse cx="35" cy="295" rx="26" ry="14" fill="#0f0f0f" transform="rotate(30 35 295)"/><circle cx="80.5" cy="68.0" r="25.4" fill="#2e2e2e" /><path d="M80.5 68.0L105.9 68.0L105.8 70.2ZM80.5 68.0L105.5 72.4L105.0 74.6ZM80.5 68.0L104.4 76.7L103.5 78.7ZM80.5 68.0L102.5 80.7L101.3 82.6ZM80.5 68.0L100.0 84.3L98.5 86.0ZM80.5 68.0L96.8 87.5L95.1 88.8ZM80.5 68.0L93.2 90.0L91.2 91.0ZM80.5 68.0L89.2 91.9L87.1 92.5ZM80.5 68.0L84.9 93.0L82.7 93.3ZM80.5 68.0L80.5 93.4L78.3 93.3ZM80.5 68.0L76.1 93.0L73.9 92.5ZM80.5 68.0L71.8 91.9L69.8 91.0ZM80.5 68.0L67.8 90.0L65.9 88.8ZM80.5 68.0L64.2 87.5L62.5 86.0ZM80.5 68.0L61.0 84.3L59.7 82.6ZM80.5 68.0L58.5 80.7L57.5 78.7ZM80.5 68.0L56.6 76.7L56.0 74.6ZM80.5 68.0L55.5 72.4L55.2 70.2ZM80.5 68.0L55.1 68.0L55.2 65.8ZM80.5 68.0L55.5 63.6L56.0 61.4ZM80.5 68.0L56.6 59.3L57.5 57.3ZM80.5 68.0L58.5 55.3L59.7 53.4ZM80.5 68.0L61.0 51.7L62.5 50.0ZM80.5 68.0L64.2 48.5L65.9 47.2ZM80.5 68.0L67.8 46.0L69.8 45.0ZM80.5 68.0L71.8 44.1L73.9 43.5ZM80.5 68.0L76.1 43.0L78.3 42.7ZM80.5 68.0L80.5 42.6L82.7 42.7ZM80.5 68.0L84.9 43.0L87.1 43.5ZM80.5 68.0L89.2 44.1L91.2 45.0ZM80.5 68.0L93.2 46.0L95.1 47.2ZM80.5 68.0L96.8 48.5L98.5 50.0ZM80.5 68.0L100.0 51.7L101.3 53.4ZM80.5 68.0L102.5 55.3L103.5 57.3ZM80.5 68.0L104.4 59.3L105.0 61.4ZM80.5 68.0L105.5 63.6L105.8 65.8Z" fill="#0c0c0c"/><circle cx="80.5" cy="68.0" r="4.6" fill="#181818" /><circle cx="401.5" cy="62.3" r="25.5" fill="#2e2e2e" /><path d="M401.5 62.3L427.0 62.3L426.9 64.5ZM401.5 62.3L426.6 66.7L426.1 68.9ZM401.5 62.3L425.5 71.0L424.6 73.1ZM401.5 62.3L423.6 75.0L422.4 76.9ZM401.5 62.3L421.0 78.7L419.5 80.3ZM401.5 62.3L417.9 81.8L416.1 83.2ZM401.5 62.3L414.2 84.4L412.3 85.4ZM401.5 62.3L410.2 86.3L408.1 86.9ZM401.5 62.3L405.9 87.4L403.7 87.7ZM401.5 62.3L401.5 87.8L399.3 87.7ZM401.5 62.3L397.1 87.4L394.9 86.9ZM401.5 62.3L392.8 86.3L390.7 85.4ZM401.5 62.3L388.8 84.4L386.9 83.2ZM401.5 62.3L385.1 81.8L383.5 80.3ZM401.5 62.3L382.0 78.7L380.6 76.9ZM401.5 62.3L379.4 75.1L378.4 73.1ZM401.5 62.3L377.5 71.0L376.9 68.9ZM401.5 62.3L376.4 66.7L376.1 64.5ZM401.5 62.3L376.0 62.3L376.1 60.1ZM401.5 62.3L376.4 57.9L376.9 55.7ZM401.5 62.3L377.5 53.6L378.4 51.5ZM401.5 62.3L379.4 49.5L380.6 47.7ZM401.5 62.3L382.0 45.9L383.5 44.3ZM401.5 62.3L385.1 42.8L386.9 41.4ZM401.5 62.3L388.8 40.2L390.7 39.2ZM401.5 62.3L392.8 38.3L394.9 37.7ZM401.5 62.3L397.1 37.2L399.3 36.9ZM401.5 62.3L401.5 36.8L403.7 36.9ZM401.5 62.3L405.9 37.2L408.1 37.7ZM401.5 62.3L410.2 38.3L412.3 39.2ZM401.5 62.3L414.2 40.2L416.1 41.4ZM401.5 62.3L417.9 42.8L419.5 44.3ZM401.5 62.3L421.0 45.9L422.4 47.7ZM401.5 62.3L423.6 49.6L424.6 51.5ZM401.5 62.3L425.5 53.6L426.1 55.7ZM401.5 62.3L426.6 57.9L426.9 60.1Z" fill="#0c0c0c"/><circle cx="401.5" cy="62.3" r="4.6" fill="#181818" /><circle cx="80.0" cy="290.5" r="25.4" fill="#2e2e2e" /><path d="M80.0 290.5L105.4 290.5L105.3 292.7ZM80.0 290.5L105.0 294.9L104.5 297.1ZM80.0 290.5L103.9 299.2L103.0 301.2ZM80.0 290.5L102.0 303.2L100.8 305.1ZM80.0 290.5L99.5 306.8L98.0 308.5ZM80.0 290.5L96.3 310.0L94.6 311.3ZM80.0 290.5L92.7 312.5L90.7 313.5ZM80.0 290.5L88.7 314.4L86.6 315.0ZM80.0 290.5L84.4 315.5L82.2 315.8ZM80.0 290.5L80.0 315.9L77.8 315.8ZM80.0 290.5L75.6 315.5L73.4 315.0ZM80.0 290.5L71.3 314.4L69.3 313.5ZM80.0 290.5L67.3 312.5L65.4 311.3ZM80.0 290.5L63.7 310.0L62.0 308.5ZM80.0 290.5L60.5 306.8L59.2 305.1ZM80.0 290.5L58.0 303.2L57.0 301.2ZM80.0 290.5L56.1 299.2L55.5 297.1ZM80.0 290.5L55.0 294.9L54.7 292.7ZM80.0 290.5L54.6 290.5L54.7 288.3ZM80.0 290.5L55.0 286.1L55.5 283.9ZM80.0 290.5L56.1 281.8L57.0 279.8ZM80.0 290.5L58.0 277.8L59.2 275.9ZM80.0 290.5L60.5 274.2L62.0 272.5ZM80.0 290.5L63.7 271.0L65.4 269.7ZM80.0 290.5L67.3 268.5L69.3 267.5ZM80.0 290.5L71.3 266.6L73.4 266.0ZM80.0 290.5L75.6 265.5L77.8 265.2ZM80.0 290.5L80.0 265.1L82.2 265.2ZM80.0 290.5L84.4 265.5L86.6 266.0ZM80.0 290.5L88.7 266.6L90.7 267.5ZM80.0 290.5L92.7 268.5L94.6 269.7ZM80.0 290.5L96.3 271.0L98.0 272.5ZM80.0 290.5L99.5 274.2L100.8 275.9ZM80.0 290.5L102.0 277.8L103.0 279.8ZM80.0 290.5L103.9 281.8L104.5 283.9ZM80.0 290.5L105.0 286.1L105.3 288.3Z" fill="#0c0c0c"/><circle cx="80.0" cy="290.5" r="4.6" fill="#181818" /><circle cx="403.5" cy="293.0" r="27.0" fill="#2e2e2e" /><path d="M403.5 293.0L430.5 293.0L430.4 295.4ZM403.5 293.0L430.1 297.7L429.6 300.0ZM403.5 293.0L428.9 302.2L428.0 304.4ZM403.5 293.0L426.9 306.5L425.6 308.5ZM403.5 293.0L424.2 310.4L422.6 312.1ZM403.5 293.0L420.9 313.7L419.0 315.1ZM403.5 293.0L417.0 316.4L414.9 317.5ZM403.5 293.0L412.7 318.4L410.5 319.1ZM403.5 293.0L408.2 319.6L405.9 319.9ZM403.5 293.0L403.5 320.0L401.1 319.9ZM403.5 293.0L398.8 319.6L396.5 319.1ZM403.5 293.0L394.3 318.4L392.1 317.5ZM403.5 293.0L390.0 316.4L388.0 315.1ZM403.5 293.0L386.1 313.7L384.4 312.1ZM403.5 293.0L382.8 310.4L381.4 308.5ZM403.5 293.0L380.1 306.5L379.0 304.4ZM403.5 293.0L378.1 302.2L377.4 300.0ZM403.5 293.0L376.9 297.7L376.6 295.4ZM403.5 293.0L376.5 293.0L376.6 290.6ZM403.5 293.0L376.9 288.3L377.4 286.0ZM403.5 293.0L378.1 283.8L379.0 281.6ZM403.5 293.0L380.1 279.5L381.4 277.5ZM403.5 293.0L382.8 275.6L384.4 273.9ZM403.5 293.0L386.1 272.3L388.0 270.9ZM403.5 293.0L390.0 269.6L392.1 268.5ZM403.5 293.0L394.3 267.6L396.5 266.9ZM403.5 293.0L398.8 266.4L401.1 266.1ZM403.5 293.0L403.5 266.0L405.9 266.1ZM403.5 293.0L408.2 266.4L410.5 266.9ZM403.5 293.0L412.7 267.6L414.9 268.5ZM403.5 293.0L417.0 269.6L419.0 270.9ZM403.5 293.0L420.9 272.3L422.6 273.9ZM403.5 293.0L424.2 275.6L425.6 277.5ZM403.5 293.0L426.9 279.5L428.0 281.6ZM403.5 293.0L428.9 283.8L429.6 286.0ZM403.5 293.0L430.1 288.3L430.4 290.6Z" fill="#0c0c0c"/><circle cx="403.5" cy="293.0" r="4.9" fill="#181818" /><rect x="112.0" y="44.0" width="257.0" height="12.0" fill="#3c3c3c" /><path d="M112.0 44.0h1.1v12.0h-1.1ZM114.2 44.0h1.2v12.0h-1.2ZM116.6 44.0h1.5v12.0h-1.5ZM119.6 44.0h1.7v12.0h-1.7ZM122.9 44.0h1.7v12.0h-1.7ZM126.2 44.0h1.5v12.0h-1.5ZM129.2 44.0h1.2v12.0h-1.2ZM131.6 44.0h1.1v12.0h-1.1ZM133.8 44.0h1.2v12.0h-1.2ZM136.2 44.0h1.5v12.0h-1.5ZM139.2 44.0h1.7v12.0h-1.7ZM142.5 44.0h1.7v12.0h-1.7ZM145.9 44.0h1.5v12.0h-1.5ZM148.8 44.0h1.2v12.0h-1.2ZM151.2 44.0h1.1v12.0h-1.1ZM153.4 44.0h1.2v12.0h-1.2ZM155.8 44.0h1.5v12.0h-1.5ZM158.8 44.0h1.7v12.0h-1.7ZM162.1 44.0h1.7v12.0h-1.7ZM165.5 44.0h1.5v12.0h-1.5ZM168.4 44.0h1.2v12.0h-1.2ZM170.8 44.0h1.1v12.0h-1.1ZM173.0 44.0h1.2v12.0h-1.2ZM175.4 44.0h1.5v12.0h-1.5ZM178.4 44.0h1.7v12.0h-1.7ZM181.7 44.0h1.7v12.0h-1.7ZM185.1 44.0h1.4v12.0h-1.4ZM188.0 44.0h1.2v12.0h-1.2ZM190.4 44.0h1.1v12.0h-1.1ZM192.6 44.0h1.2v12.0h-1.2ZM195.0 44.0h1.5v12.0h-1.5ZM198.0 44.0h1.7v12.0h-1.7ZM201.4 44.0h1.7v12.0h-1.7ZM204.7 44.0h1.4v12.0h-1.4ZM207.6 44.0h1.2v12.0h-1.2ZM209.9 44.0h1.1v12.0h-1.1ZM212.1 44.0h1.2v12.0h-1.2ZM214.6 44.0h1.5v12.0h-1.5ZM217.6 44.0h1.7v12.0h-1.7ZM221.0 44.0h1.7v12.0h-1.7ZM224.3 44.0h1.4v12.0h-1.4ZM227.2 44.0h1.2v12.0h-1.2ZM229.5 44.0h1.1v12.0h-1.1ZM231.7 44.0h1.2v12.0h-1.2ZM234.2 44.0h1.5v12.0h-1.5ZM237.2 44.0h1.7v12.0h-1.7ZM240.6 44.0h1.7v12.0h-1.7ZM243.9 44.0h1.4v12.0h-1.4ZM246.8 44.0h1.2v12.0h-1.2ZM249.1 44.0h1.1v12.0h-1.1ZM251.3 44.0h1.2v12.0h-1.2ZM253.8 44.0h1.5v12.0h-1.5ZM256.8 44.0h1.7v12.0h-1.7ZM260.2 44.0h1.7v12.0h-1.7ZM263.5 44.0h1.4v12.0h-1.4ZM266.3 44.0h1.2v12.0h-1.2ZM268.7 44.0h1.1v12.0h-1.1ZM270.9 44.0h1.2v12.0h-1.2ZM273.4 44.0h1.5v12.0h-1.5ZM276.4 44.0h1.7v12.0h-1.7ZM279.8 44.0h1.6v12.0h-1.6ZM310.1 44.0h1.3v12.0h-1.3ZM312.6 44.0h1.5v12.0h-1.5ZM315.6 44.0h1.7v12.0h-1.7ZM319.0 44.0h1.6v12.0h-1.6ZM322.3 44.0h1.4v12.0h-1.4ZM325.1 44.0h1.2v12.0h-1.2ZM327.5 44.0h1.1v12.0h-1.1ZM329.7 44.0h1.3v12.0h-1.3ZM332.2 44.0h1.5v12.0h-1.5ZM335.3 44.0h1.7v12.0h-1.7ZM338.6 44.0h1.6v12.0h-1.6ZM341.9 44.0h1.4v12.0h-1.4ZM344.7 44.0h1.2v12.0h-1.2ZM347.1 44.0h1.1v12.0h-1.1ZM349.3 44.0h1.3v12.0h-1.3ZM351.8 44.0h1.5v12.0h-1.5ZM354.9 44.0h1.7v12.0h-1.7ZM358.2 44.0h1.6v12.0h-1.6ZM361.5 44.0h1.4v12.0h-1.4ZM364.3 44.0h1.2v12.0h-1.2ZM366.7 44.0h1.1v12.0h-1.1ZM368.9 44.0h1.3v12.0h-1.3Z" fill="#121212"/><rect x="113.0" y="307.0" width="256.0" height="12.0" fill="#303030" /><path d="M113.0 307.0h1.1v12.0h-1.1ZM115.2 307.0h1.2v12.0h-1.2ZM117.6 307.0h1.5v12.0h-1.5ZM120.6 307.0h1.7v12.0h-1.7ZM123.9 307.0h1.7v12.0h-1.7ZM127.2 307.0h1.5v12.0h-1.5ZM130.2 307.0h1.2v12.0h-1.2ZM132.6 307.0h1.1v12.0h-1.1ZM134.8 307.0h1.2v12.0h-1.2ZM137.2 307.0h1.5v12.0h-1.5ZM140.2 307.0h1.7v12.0h-1.7ZM143.5 307.0h1.7v12.0h-1.7ZM146.9 307.0h1.5v12.0h-1.5ZM149.8 307.0h1.2v12.0h-1.2ZM152.2 307.0h1.1v12.0h-1.1ZM154.4 307.0h1.2v12.0h-1.2ZM156.8 307.0h1.5v12.0h-1.5ZM159.8 307.0h1.7v12.0h-1.7ZM163.1 307.0h1.7v12.0h-1.7ZM166.5 307.0h1.5v12.0h-1.5ZM169.4 307.0h1.2v12.0h-1.2ZM171.8 307.0h1.1v12.0h-1.1ZM174.0 307.0h1.2v12.0h-1.2ZM176.4 307.0h1.5v12.0h-1.5ZM179.4 307.0h1.7v12.0h-1.7ZM182.7 307.0h1.7v12.0h-1.7ZM186.1 307.0h1.4v12.0h-1.4ZM189.0 307.0h1.2v12.0h-1.2ZM191.4 307.0h1.1v12.0h-1.1ZM193.6 307.0h1.2v12.0h-1.2ZM196.0 307.0h1.5v12.0h-1.5ZM199.0 307.0h1.7v12.0h-1.7ZM202.4 307.0h1.7v12.0h-1.7ZM205.7 307.0h1.4v12.0h-1.4ZM208.6 307.0h1.2v12.0h-1.2ZM210.9 307.0h1.1v12.0h-1.1ZM213.1 307.0h1.2v12.0h-1.2ZM215.6 307.0h1.5v12.0h-1.5ZM218.6 307.0h1.7v12.0h-1.7ZM222.0 307.0h1.7v12.0h-1.7ZM225.3 307.0h1.4v12.0h-1.4ZM228.2 307.0h1.2v12.0h-1.2ZM230.5 307.0h1.1v12.0h-1.1ZM232.7 307.0h1.2v12.0h-1.2ZM235.2 307.0h1.5v12.0h-1.5ZM238.2 307.0h1.7v12.0h-1.7ZM241.6 307.0h1.7v12.0h-1.7ZM244.9 307.0h1.4v12.0h-1.4ZM247.8 307.0h1.2v12.0h-1.2ZM250.1 307.0h1.1v12.0h-1.1ZM252.3 307.0h1.2v12.0h-1.2ZM254.8 307.0h1.5v12.0h-1.5ZM257.8 307.0h1.7v12.0h-1.7ZM261.2 307.0h1.7v12.0h-1.7ZM264.5 307.0h1.4v12.0h-1.4ZM267.3 307.0h1.2v12.0h-1.2ZM269.7 307.0h1.1v12.0h-1.1ZM271.9 307.0h1.2v12.0h-1.2ZM274.4 307.0h1.5v12.0h-1.5ZM277.4 307.0h1.7v12.0h-1.7ZM280.8 307.0h1.6v12.0h-1.6ZM284.1 307.0h1.4v12.0h-1.4ZM286.9 307.0h1.2v12.0h-1.2ZM289.3 307.0h1.1v12.0h-1.1ZM291.5 307.0h1.3v12.0h-1.3ZM294.0 307.0h1.5v12.0h-1.5ZM297.0 307.0h1.7v12.0h-1.7ZM300.4 307.0h1.6v12.0h-1.6ZM303.7 307.0h1.4v12.0h-1.4ZM306.5 307.0h1.2v12.0h-1.2ZM308.9 307.0h1.1v12.0h-1.1ZM311.1 307.0h1.3v12.0h-1.3ZM313.6 307.0h1.5v12.0h-1.5ZM316.6 307.0h1.7v12.0h-1.7ZM320.0 307.0h1.6v12.0h-1.6ZM323.3 307.0h1.4v12.0h-1.4ZM326.1 307.0h1.2v12.0h-1.2ZM328.5 307.0h1.1v12.0h-1.1ZM330.7 307.0h1.3v12.0h-1.3ZM333.2 307.0h1.5v12.0h-1.5ZM336.3 307.0h1.7v12.0h-1.7ZM339.6 307.0h1.6v12.0h-1.6ZM342.9 307.0h1.4v12.0h-1.4ZM345.7 307.0h1.2v12.0h-1.2ZM348.1 307.0h1.1v12.0h-1.1ZM350.3 307.0h1.3v12.0h-1.3ZM352.8 307.0h1.5v12.0h-1.5ZM355.9 307.0h1.7v12.0h-1.7ZM359.2 307.0h1.6v12.0h-1.6ZM362.5 307.0h1.4v12.0h-1.4ZM365.3 307.0h1.2v12.0h-1.2ZM367.7 307.0h1.1v12.0h-1.1Z" fill="#0e0e0e"/><rect x="112.0" y="59.0" width="127.0" height="24.0" fill="#353535" /><rect x="239.0" y="53.5" width="130.0" height="28.5" fill="#171717" /><rect x="114.0" y="275.5" width="126.0" height="26.0" fill="#0a0a0a" /><rect x="240.0" y="277.0" width="129.0" height="25.5" fill="#2a2a2a" /><rect x="63.5" y="106.0" width="28.0" height="148.0" fill="#070707" /><rect x="66.5" y="109.0" width="22.0" height="22.0" fill="#1c1c1c" /><rect x="66.5" y="133.0" width="22.0" height="22.0" fill="#222" /><rect x="66.5" y="157.0" width="22.0" height="22.0" fill="#1a1a1a" /><rect x="66.5" y="181.0" width="22.0" height="22.0" fill="#1e1e1e" /><rect x="66.5" y="205.0" width="22.0" height="22.0" fill="#181818" /><rect x="66.5" y="229.0" width="22.0" height="22.0" fill="#1c1c1c" /><rect x="391.0" y="101.0" width="28.0" height="153.0" fill="#070707" /><rect x="394.0" y="104.0" width="22.0" height="22.8" fill="#2a2a2a" /><rect x="394.0" y="128.8" width="22.0" height="22.8" fill="#3e3e3e" /><rect x="394.0" y="153.7" width="22.0" height="22.8" fill="#262626" /><rect x="394.0" y="178.5" width="22.0" height="22.8" fill="#383838" /><rect x="394.0" y="203.3" width="22.0" height="22.8" fill="#101010" /><rect x="394.0" y="228.2" width="22.0" height="22.8" fill="#2c2c2c" /><circle cx="302.0" cy="112.0" r="23.0" fill="#353535" /><circle cx="302.0" cy="112.0" r="23.0" fill="#353535" /><circle cx="302.0" cy="112.0" r="20.7" fill="#0e0e0e" /><circle cx="302.0" cy="112.0" r="18.4" fill="#353535" /><circle cx="302.0" cy="112.0" r="16.1" fill="#0e0e0e" /><circle cx="302.0" cy="112.0" r="13.8" fill="#353535" /><circle cx="302.0" cy="112.0" r="11.5" fill="#0e0e0e" /><circle cx="302.0" cy="112.0" r="9.2" fill="#353535" /><circle cx="302.0" cy="112.0" r="6.9" fill="#0e0e0e" /><circle cx="302.0" cy="112.0" r="4.6" fill="#353535" /><circle cx="302.0" cy="112.0" r="2.3" fill="#0e0e0e" /><circle cx="174.0" cy="244.6" r="22.0" fill="#353535" /><circle cx="174.0" cy="244.6" r="22.0" fill="#0e0e0e" /><circle cx="174.0" cy="244.6" r="17.6" fill="#353535" /><circle cx="174.0" cy="244.6" r="13.2" fill="#0e0e0e" /><circle cx="174.0" cy="244.6" r="8.8" fill="#353535" /><circle cx="174.0" cy="244.6" r="4.4" fill="#0e0e0e" /><circle cx="180.0" cy="113.5" r="22.0" fill="#161616" stroke="#0a0a0a" stroke-width="1"/><circle cx="300.8" cy="247.0" r="24.0" fill="#161616" stroke="#0a0a0a" stroke-width="1"/><circle cx="180.0" cy="120.0" r="3.0" fill="#555" /><circle cx="297.0" cy="223.0" r="3.0" fill="#555" /><path d="M303.70 180.00L326.70 180.00A86.5 86.5 0 0 1 326.29 188.44L303.40 186.20A63.5 63.5 0 0 0 303.70 180.00Z" fill="#181818" stroke="#181818" stroke-width="0.6"/><path d="M303.46 185.53L326.37 187.54A86.5 86.5 0 0 1 325.22 195.91L302.62 191.68A63.5 63.5 0 0 0 303.46 185.53Z" fill="#181818" stroke="#181818" stroke-width="0.6"/><path d="M302.74 191.03L325.39 195.02A86.5 86.5 0 0 1 323.51 203.26L301.36 197.08A63.5 63.5 0 0 0 302.74 191.03Z" fill="#181818" stroke="#181818" stroke-width="0.6"/><path d="M301.54 196.44L323.75 202.39A86.5 86.5 0 0 1 321.17 210.43L299.64 202.34A63.5 63.5 0 0 0 301.54 196.44Z" fill="#171717" stroke="#171717" stroke-width="0.6"/><path d="M299.87 201.72L321.48 209.58A86.5 86.5 0 0 1 318.21 217.38L297.47 207.44A63.5 63.5 0 0 0 299.87 201.72Z" fill="#171717" stroke="#171717" stroke-width="0.6"/><path d="M297.75 206.84L318.60 216.56A86.5 86.5 0 0 1 314.65 224.03L294.86 212.32A63.5 63.5 0 0 0 297.75 206.84Z" fill="#171717" stroke="#171717" stroke-width="0.6"/><path d="M295.19 211.75L315.11 223.25A86.5 86.5 0 0 1 310.53 230.35L291.83 216.96A63.5 63.5 0 0 0 295.19 211.75Z" fill="#161616" stroke="#161616" stroke-width="0.6"/><path d="M292.22 216.42L311.06 229.61A86.5 86.5 0 0 1 305.88 236.29L288.41 221.32A63.5 63.5 0 0 0 292.22 216.42Z" fill="#161616" stroke="#161616" stroke-width="0.6"/><path d="M288.84 220.82L306.46 235.60A86.5 86.5 0 0 1 300.72 241.80L284.63 225.37A63.5 63.5 0 0 0 288.84 220.82Z" fill="#161616" stroke="#161616" stroke-width="0.6"/><path d="M285.10 224.90L301.36 241.16A86.5 86.5 0 0 1 295.10 246.84L280.51 229.07A63.5 63.5 0 0 0 285.10 224.90Z" fill="#202020" stroke="#202020" stroke-width="0.6"/><path d="M281.02 228.64L295.80 246.26A86.5 86.5 0 0 1 289.07 251.37L276.08 232.39A63.5 63.5 0 0 0 281.02 228.64Z" fill="#202020" stroke="#202020" stroke-width="0.6"/><path d="M276.62 232.02L289.81 250.86A86.5 86.5 0 0 1 282.66 255.36L271.37 235.32A63.5 63.5 0 0 0 276.62 232.02Z" fill="#202020" stroke="#202020" stroke-width="0.6"/><path d="M271.95 234.99L283.45 254.91A86.5 86.5 0 0 1 275.93 258.77L266.43 237.83A63.5 63.5 0 0 0 271.95 234.99Z" fill="#212121" stroke="#212121" stroke-width="0.6"/><path d="M267.04 237.55L276.76 258.40A86.5 86.5 0 0 1 268.93 261.59L261.29 239.89A63.5 63.5 0 0 0 267.04 237.55Z" fill="#212121" stroke="#212121" stroke-width="0.6"/><path d="M261.92 239.67L269.78 261.28A86.5 86.5 0 0 1 261.71 263.78L255.99 241.51A63.5 63.5 0 0 0 261.92 239.67Z" fill="#212121" stroke="#212121" stroke-width="0.6"/><path d="M256.64 241.34L262.59 263.55A86.5 86.5 0 0 1 254.33 265.34L250.57 242.65A63.5 63.5 0 0 0 256.64 241.34Z" fill="#222222" stroke="#222222" stroke-width="0.6"/><path d="M251.23 242.54L255.22 265.19A86.5 86.5 0 0 1 246.84 266.25L245.07 243.31A63.5 63.5 0 0 0 251.23 242.54Z" fill="#222222" stroke="#222222" stroke-width="0.6"/><path d="M245.73 243.26L247.74 266.17A86.5 86.5 0 0 1 239.29 266.50L239.54 243.50A63.5 63.5 0 0 0 245.73 243.26Z" fill="#222222" stroke="#222222" stroke-width="0.6"/><path d="M240.20 243.50L240.20 266.50A86.5 86.5 0 0 1 231.76 266.09L234.00 243.20A63.5 63.5 0 0 0 240.20 243.50Z" fill="#232323" stroke="#232323" stroke-width="0.6"/><path d="M234.67 243.26L232.66 266.17A86.5 86.5 0 0 1 224.29 265.02L228.52 242.42A63.5 63.5 0 0 0 234.67 243.26Z" fill="#232323" stroke="#232323" stroke-width="0.6"/><path d="M229.17 242.54L225.18 265.19A86.5 86.5 0 0 1 216.94 263.31L223.12 241.16A63.5 63.5 0 0 0 229.17 242.54Z" fill="#242424" stroke="#242424" stroke-width="0.6"/><path d="M223.76 241.34L217.81 263.55A86.5 86.5 0 0 1 209.77 260.97L217.86 239.44A63.5 63.5 0 0 0 223.76 241.34Z" fill="#242424" stroke="#242424" stroke-width="0.6"/><path d="M218.48 239.67L210.62 261.28A86.5 86.5 0 0 1 202.82 258.01L212.76 237.27A63.5 63.5 0 0 0 218.48 239.67Z" fill="#252525" stroke="#252525" stroke-width="0.6"/><path d="M213.36 237.55L203.64 258.40A86.5 86.5 0 0 1 196.17 254.45L207.88 234.66A63.5 63.5 0 0 0 213.36 237.55Z" fill="#252525" stroke="#252525" stroke-width="0.6"/><path d="M208.45 234.99L196.95 254.91A86.5 86.5 0 0 1 189.85 250.33L203.24 231.63A63.5 63.5 0 0 0 208.45 234.99Z" fill="#262626" stroke="#262626" stroke-width="0.6"/><path d="M203.78 232.02L190.59 250.86A86.5 86.5 0 0 1 183.91 245.68L198.88 228.21A63.5 63.5 0 0 0 203.78 232.02Z" fill="#262626" stroke="#262626" stroke-width="0.6"/><path d="M199.38 228.64L184.60 246.26A86.5 86.5 0 0 1 178.40 240.52L194.83 224.43A63.5 63.5 0 0 0 199.38 228.64Z" fill="#272727" stroke="#272727" stroke-width="0.6"/><path d="M195.30 224.90L179.04 241.16A86.5 86.5 0 0 1 173.36 234.90L191.13 220.31A63.5 63.5 0 0 0 195.30 224.90Z" fill="#272727" stroke="#272727" stroke-width="0.6"/><path d="M191.56 220.82L173.94 235.60A86.5 86.5 0 0 1 168.83 228.87L187.81 215.88A63.5 63.5 0 0 0 191.56 220.82Z" fill="#282828" stroke="#282828" stroke-width="0.6"/><path d="M188.18 216.42L169.34 229.61A86.5 86.5 0 0 1 164.84 222.46L184.88 211.17A63.5 63.5 0 0 0 188.18 216.42Z" fill="#282828" stroke="#282828" stroke-width="0.6"/><path d="M185.21 211.75L165.29 223.25A86.5 86.5 0 0 1 161.43 215.73L182.37 206.23A63.5 63.5 0 0 0 185.21 211.75Z" fill="#292929" stroke="#292929" stroke-width="0.6"/><path d="M182.65 206.84L161.80 216.56A86.5 86.5 0 0 1 158.61 208.73L180.31 201.09A63.5 63.5 0 0 0 182.65 206.84Z" fill="#292929" stroke="#292929" stroke-width="0.6"/><path d="M180.53 201.72L158.92 209.58A86.5 86.5 0 0 1 156.42 201.51L178.69 195.79A63.5 63.5 0 0 0 180.53 201.72Z" fill="#2a2a2a" stroke="#2a2a2a" stroke-width="0.6"/><path d="M178.86 196.44L156.65 202.39A86.5 86.5 0 0 1 154.86 194.13L177.55 190.37A63.5 63.5 0 0 0 178.86 196.44Z" fill="#2a2a2a" stroke="#2a2a2a" stroke-width="0.6"/><path d="M177.66 191.03L155.01 195.02A86.5 86.5 0 0 1 153.95 186.64L176.89 184.87A63.5 63.5 0 0 0 177.66 191.03Z" fill="#2b2b2b" stroke="#2b2b2b" stroke-width="0.6"/><path d="M176.94 185.53L154.03 187.54A86.5 86.5 0 0 1 153.70 179.09L176.70 179.34A63.5 63.5 0 0 0 176.94 185.53Z" fill="#2b2b2b" stroke="#2b2b2b" stroke-width="0.6"/><path d="M176.70 180.00L153.70 180.00A86.5 86.5 0 0 1 154.11 171.56L177.00 173.80A63.5 63.5 0 0 0 176.70 180.00Z" fill="#2b2b2b" stroke="#2b2b2b" stroke-width="0.6"/><path d="M176.94 174.47L154.03 172.46A86.5 86.5 0 0 1 155.18 164.09L177.78 168.32A63.5 63.5 0 0 0 176.94 174.47Z" fill="#2b2b2b" stroke="#2b2b2b" stroke-width="0.6"/><path d="M177.66 168.97L155.01 164.98A86.5 86.5 0 0 1 156.89 156.74L179.04 162.92A63.5 63.5 0 0 0 177.66 168.97Z" fill="#2b2b2b" stroke="#2b2b2b" stroke-width="0.6"/><path d="M178.86 163.56L156.65 157.61A86.5 86.5 0 0 1 159.23 149.57L180.76 157.66A63.5 63.5 0 0 0 178.86 163.56Z" fill="#2b2b2b" stroke="#2b2b2b" stroke-width="0.6"/><path d="M180.53 158.28L158.92 150.42A86.5 86.5 0 0 1 162.19 142.62L182.93 152.56A63.5 63.5 0 0 0 180.53 158.28Z" fill="#2b2b2b" stroke="#2b2b2b" stroke-width="0.6"/><path d="M182.65 153.16L161.80 143.44A86.5 86.5 0 0 1 165.75 135.97L185.54 147.68A63.5 63.5 0 0 0 182.65 153.16Z" fill="#2b2b2b" stroke="#2b2b2b" stroke-width="0.6"/><path d="M185.21 148.25L165.29 136.75A86.5 86.5 0 0 1 169.87 129.65L188.57 143.04A63.5 63.5 0 0 0 185.21 148.25Z" fill="#2a2a2a" stroke="#2a2a2a" stroke-width="0.6"/><path d="M188.18 143.58L169.34 130.39A86.5 86.5 0 0 1 174.52 123.71L191.99 138.68A63.5 63.5 0 0 0 188.18 143.58Z" fill="#2a2a2a" stroke="#2a2a2a" stroke-width="0.6"/><path d="M191.56 139.18L173.94 124.40A86.5 86.5 0 0 1 179.68 118.20L195.77 134.63A63.5 63.5 0 0 0 191.56 139.18Z" fill="#2a2a2a" stroke="#2a2a2a" stroke-width="0.6"/><path d="M195.30 135.10L179.04 118.84A86.5 86.5 0 0 1 185.30 113.16L199.89 130.93A63.5 63.5 0 0 0 195.30 135.10Z" fill="#2a2a2a" stroke="#2a2a2a" stroke-width="0.6"/><path d="M199.38 131.36L184.60 113.74A86.5 86.5 0 0 1 191.33 108.63L204.32 127.61A63.5 63.5 0 0 0 199.38 131.36Z" fill="#2a2a2a" stroke="#2a2a2a" stroke-width="0.6"/><path d="M203.78 127.98L190.59 109.14A86.5 86.5 0 0 1 197.74 104.64L209.03 124.68A63.5 63.5 0 0 0 203.78 127.98Z" fill="#2a2a2a" stroke="#2a2a2a" stroke-width="0.6"/><path d="M208.45 125.01L196.95 105.09A86.5 86.5 0 0 1 204.47 101.23L213.97 122.17A63.5 63.5 0 0 0 208.45 125.01Z" fill="#292929" stroke="#292929" stroke-width="0.6"/><path d="M213.36 122.45L203.64 101.60A86.5 86.5 0 0 1 211.47 98.41L219.11 120.11A63.5 63.5 0 0 0 213.36 122.45Z" fill="#292929" stroke="#292929" stroke-width="0.6"/><path d="M218.48 120.33L210.62 98.72A86.5 86.5 0 0 1 218.69 96.22L224.41 118.49A63.5 63.5 0 0 0 218.48 120.33Z" fill="#292929" stroke="#292929" stroke-width="0.6"/><path d="M223.76 118.66L217.81 96.45A86.5 86.5 0 0 1 226.07 94.66L229.83 117.35A63.5 63.5 0 0 0 223.76 118.66Z" fill="#292929" stroke="#292929" stroke-width="0.6"/><path d="M229.17 117.46L225.18 94.81A86.5 86.5 0 0 1 233.56 93.75L235.33 116.69A63.5 63.5 0 0 0 229.17 117.46Z" fill="#292929" stroke="#292929" stroke-width="0.6"/><path d="M234.67 116.74L232.66 93.83A86.5 86.5 0 0 1 241.11 93.50L240.86 116.50A63.5 63.5 0 0 0 234.67 116.74Z" fill="#292929" stroke="#292929" stroke-width="0.6"/><path d="M240.20 116.50L240.20 93.50A86.5 86.5 0 0 1 248.64 93.91L246.40 116.80A63.5 63.5 0 0 0 240.20 116.50Z" fill="#282828" stroke="#282828" stroke-width="0.6"/><path d="M245.73 116.74L247.74 93.83A86.5 86.5 0 0 1 256.11 94.98L251.88 117.58A63.5 63.5 0 0 0 245.73 116.74Z" fill="#272727" stroke="#272727" stroke-width="0.6"/><path d="M251.23 117.46L255.22 94.81A86.5 86.5 0 0 1 263.46 96.69L257.28 118.84A63.5 63.5 0 0 0 251.23 117.46Z" fill="#262626" stroke="#262626" stroke-width="0.6"/><path d="M256.64 118.66L262.59 96.45A86.5 86.5 0 0 1 270.63 99.03L262.54 120.56A63.5 63.5 0 0 0 256.64 118.66Z" fill="#262626" stroke="#262626" stroke-width="0.6"/><path d="M261.92 120.33L269.78 98.72A86.5 86.5 0 0 1 277.58 101.99L267.64 122.73A63.5 63.5 0 0 0 261.92 120.33Z" fill="#252525" stroke="#252525" stroke-width="0.6"/><path d="M267.04 122.45L276.76 101.60A86.5 86.5 0 0 1 284.23 105.55L272.52 125.34A63.5 63.5 0 0 0 267.04 122.45Z" fill="#242424" stroke="#242424" stroke-width="0.6"/><path d="M271.95 125.01L283.45 105.09A86.5 86.5 0 0 1 290.55 109.67L277.16 128.37A63.5 63.5 0 0 0 271.95 125.01Z" fill="#232323" stroke="#232323" stroke-width="0.6"/><path d="M276.62 127.98L289.81 109.14A86.5 86.5 0 0 1 296.49 114.32L281.52 131.79A63.5 63.5 0 0 0 276.62 127.98Z" fill="#222222" stroke="#222222" stroke-width="0.6"/><path d="M281.02 131.36L295.80 113.74A86.5 86.5 0 0 1 302.00 119.48L285.57 135.57A63.5 63.5 0 0 0 281.02 131.36Z" fill="#222222" stroke="#222222" stroke-width="0.6"/><path d="M285.10 135.10L301.36 118.84A86.5 86.5 0 0 1 307.04 125.10L289.27 139.69A63.5 63.5 0 0 0 285.10 135.10Z" fill="#212121" stroke="#212121" stroke-width="0.6"/><path d="M288.84 139.18L306.46 124.40A86.5 86.5 0 0 1 311.57 131.13L292.59 144.12A63.5 63.5 0 0 0 288.84 139.18Z" fill="#202020" stroke="#202020" stroke-width="0.6"/><path d="M292.22 143.58L311.06 130.39A86.5 86.5 0 0 1 315.56 137.54L295.52 148.83A63.5 63.5 0 0 0 292.22 143.58Z" fill="#1f1f1f" stroke="#1f1f1f" stroke-width="0.6"/><path d="M295.19 148.25L315.11 136.75A86.5 86.5 0 0 1 318.97 144.27L298.03 153.77A63.5 63.5 0 0 0 295.19 148.25Z" fill="#1e1e1e" stroke="#1e1e1e" stroke-width="0.6"/><path d="M297.75 153.16L318.60 143.44A86.5 86.5 0 0 1 321.79 151.27L300.09 158.91A63.5 63.5 0 0 0 297.75 153.16Z" fill="#1d1d1d" stroke="#1d1d1d" stroke-width="0.6"/><path d="M299.87 158.28L321.48 150.42A86.5 86.5 0 0 1 323.98 158.49L301.71 164.21A63.5 63.5 0 0 0 299.87 158.28Z" fill="#1c1c1c" stroke="#1c1c1c" stroke-width="0.6"/><path d="M301.54 163.56L323.75 157.61A86.5 86.5 0 0 1 325.54 165.87L302.85 169.63A63.5 63.5 0 0 0 301.54 163.56Z" fill="#1b1b1b" stroke="#1b1b1b" stroke-width="0.6"/><path d="M302.74 168.97L325.39 164.98A86.5 86.5 0 0 1 326.45 173.36L303.51 175.13A63.5 63.5 0 0 0 302.74 168.97Z" fill="#1a1a1a" stroke="#1a1a1a" stroke-width="0.6"/><path d="M303.46 174.47L326.37 172.46A86.5 86.5 0 0 1 326.70 180.91L303.70 180.66A63.5 63.5 0 0 0 303.46 174.47Z" fill="#191919" stroke="#191919" stroke-width="0.6"/><circle cx="240.2" cy="180.0" r="64.0" fill="#393939" /><rect x="188.6" y="130.0" width="103.0" height="100.0" fill="#3c3c3c" /><rect x="196.0" y="130.0" width="88.0" height="8.0" fill="#1e1e1e" /><rect x="188.6" y="138.0" width="9.0" height="84.0" fill="#222222" /><rect x="283.0" y="138.0" width="8.6" height="72.0" fill="#1a1a1a" /><rect x="196.0" y="221.0" width="95.6" height="9.0" fill="#1e1e1e" /><path d="M197 138L283 221M283 138L197 221" stroke="#151515" stroke-width="0.8"/><rect x="231.0" y="140.0" width="1.6" height="80.0" fill="#1c1c1c" /><rect x="234.6" y="140.0" width="1.6" height="80.0" fill="#1c1c1c" /><rect x="238.2" y="140.0" width="1.6" height="80.0" fill="#1c1c1c" /><rect x="241.8" y="140.0" width="1.6" height="80.0" fill="#1c1c1c" /><rect x="245.4" y="140.0" width="1.6" height="80.0" fill="#1c1c1c" /><rect x="198.0" y="172.0" width="84.0" height="1.6" fill="#1c1c1c" /><rect x="198.0" y="175.6" width="84.0" height="1.6" fill="#1c1c1c" /><rect x="198.0" y="179.2" width="84.0" height="1.6" fill="#1c1c1c" /><rect x="198.0" y="182.8" width="84.0" height="1.6" fill="#1c1c1c" /><rect x="230.0" y="168.0" width="19.0" height="23.0" fill="#262626" /><rect x="219.0" y="121.0" width="37.0" height="3.0" fill="#111" /><rect x="208.0" y="128.0" width="59.0" height="3.0" fill="#111" /><rect x="208.0" y="234.0" width="30.0" height="3.0" fill="#111" /><rect x="211.0" y="240.0" width="27.0" height="3.0" fill="#111" /><rect x="97.5" y="183.0" width="51.0" height="50.0" fill="#3a3a3a" /><rect x="331.0" y="123.7" width="53.0" height="51.6" fill="#3e3e3e" /><path d="M123 190V233M100 208H148.5" stroke="#151515" stroke-width="2.4"/><path d="M357.5 128V175.3M333 149.5H384" stroke="#151515" stroke-width="2.4"/><rect x="97.5" y="133.0" width="53.0" height="1.6" fill="#111" /><rect x="97.5" y="137.5" width="53.0" height="1.6" fill="#111" /><rect x="97.5" y="142.0" width="53.0" height="1.6" fill="#111" /><rect x="97.5" y="146.5" width="53.0" height="1.6" fill="#111" /><rect x="97.5" y="151.0" width="53.0" height="1.6" fill="#111" /><rect x="97.5" y="155.5" width="53.0" height="1.6" fill="#111" /><rect x="347.0" y="183.0" width="1.8" height="57.0" fill="#111" /><rect x="351.5" y="183.0" width="1.8" height="57.0" fill="#111" /><rect x="356.0" y="183.0" width="1.8" height="57.0" fill="#111" /><rect x="360.5" y="183.0" width="1.8" height="57.0" fill="#111" /><rect x="365.0" y="183.0" width="1.8" height="57.0" fill="#111" /></svg>
<svg style="left:0;top:0" width="1329" height="745"><g stroke="#000" stroke-width="1" fill="none"><path d="M768.5 372.3V576.3"/><path d="M759 372.3H768.5"/><path d="M759 440.3H768.5"/><path d="M759 508.3H768.5"/><path d="M759 576.3H768.5"/><path d="M801.6 639.3H1276.9"/><path d="M801.6 639.3V648.7"/><path d="M869.5 639.3V648.7"/><path d="M937.4 639.3V648.7"/><path d="M1005.3 639.3V648.7"/><path d="M1073.2 639.3V648.7"/><path d="M1141.1 639.3V648.7"/><path d="M1209.0 639.3V648.7"/><path d="M1276.9 639.3V648.7"/></g><g font-family="Liberation Sans" font-size="15.3" fill="#000" text-anchor="middle"><text x="801.6" y="673.8">0</text><text x="869.5" y="673.8">500</text><text x="937.4" y="673.8">1000</text><text x="1005.3" y="673.8">1500</text><text x="1073.2" y="673.8">2000</text><text x="1141.1" y="673.8">2500</text><text x="1209.0" y="673.8">3000</text><text x="1276.9" y="673.8">3500</text><text transform="translate(746,372.3) rotate(-90)">500</text><text transform="translate(746,440.3) rotate(-90)">1000</text><text transform="translate(746,508.3) rotate(-90)">1500</text><text transform="translate(746,576.3) rotate(-90)">2000</text></g></svg>
</body></html>
